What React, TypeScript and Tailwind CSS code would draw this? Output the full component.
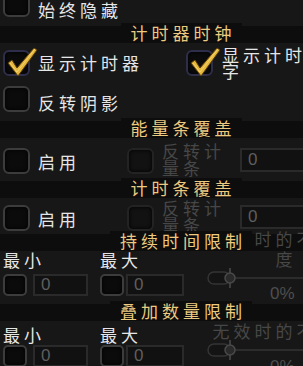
import type { ReactNode } from 'react';

function Check() {
  return (
    <svg className="pointer-events-none absolute -left-[2px] -top-[8px] h-[36px] w-[38px]" viewBox="0 0 38 36">
      <path d="M5 19 L9 16 L14 24 L31 4 L34 6 L15 32 Z" fill="#e4b63a" stroke="#5a3d0a" strokeWidth="1" strokeLinejoin="round" />
      <path d="M7 19 L14 28 L32 5" fill="none" stroke="#f8e08a" strokeWidth="1" opacity="0.7" />
    </svg>
  );
}

function Box({ on = false, dim = false, small = false }: { on?: boolean; dim?: boolean; small?: boolean }) {
  const size = small ? 'h-[22px] w-[24px] rounded-[5px]' : 'h-[26px] w-[27px] rounded-[6px]';
  const tone = dim
    ? 'border-[#232323] bg-[#121212]'
    : on
      ? 'border-[#2e2d4a] bg-[#0b0b0b]'
      : 'border-[#3c3c3c] bg-[#0b0b0b]';
  return (
    <div className={`relative shrink-0 border-2 shadow-[inset_0_0_4px_#000] ${size} ${tone}`}>
      {on && <Check />}
    </div>
  );
}

function Label({ children, className = '' }: { children: ReactNode; className?: string }) {
  return <span className={`text-[17px] leading-[20px] tracking-[4px] text-[#e6e6e6] ${className}`}>{children}</span>;
}

function Header({ children, className = '' }: { children: ReactNode; className?: string }) {
  return (
    <div className={`flex h-[17px] justify-center bg-[#0d0d0d] ${className}`}>
      <span className="relative z-20 -mt-[3px] h-[20px] bg-[#0d0d0d] px-[6px] pl-[10px] text-[17px] leading-[20px] tracking-[4px] text-[#ecca80]">
        {children}
      </span>
    </div>
  );
}

function Num({ className = '' }: { className?: string }) {
  return (
    <div
      className={`flex shrink-0 items-center border-2 border-[#2a2a2a] bg-[#111111] pl-[6px] font-['Liberation_Sans',sans-serif] text-[17px] text-[#5e5e5e] ${className}`}
    >
      0
    </div>
  );
}

function Slider() {
  return (
    <svg className="h-[20px] w-[100px]" viewBox="0 0 100 20">
      <line x1="24" y1="10" x2="100" y2="10" stroke="#2c2c2c" strokeWidth="2" />
      <rect x="3" y="4" width="22" height="12" rx="6" fill="#141414" stroke="#343434" strokeWidth="1.5" />
      <line x1="25" y1="0" x2="25" y2="20" stroke="#3e3e3e" strokeWidth="2" />
      <circle cx="25" cy="10" r="5" fill="#2a2a2a" stroke="#4a4a4a" strokeWidth="1.5" />
    </svg>
  );
}

function OverlayRow({ top }: { top: string }) {
  return (
    <div className={`flex h-[25px] items-start pl-[3px] ${top}`}>
      <div className="flex w-[124px] items-start">
        <Box />
        <Label className="ml-[8px] mt-[4px]">启用</Label>
      </div>
      <Box dim />
      <span className="-mt-[6px] ml-[8px] w-[66px] text-[17px] leading-[17px] tracking-[4px] text-[#474747]">反转计量条</span>
      <Num className="ml-[12px] h-[24px] w-[80px]" />
    </div>
  );
}

export default function App() {
  return (
    <div className="h-[366px] w-[303px] overflow-hidden bg-[#171717] font-['Noto_Sans_CJK_SC',sans-serif]">
      <div className="relative flex w-[362px] flex-col">
        <div className="-mt-[9px] flex h-[26px] items-start pl-[3px]">
          <Box />
          <Label className="ml-[8px] mt-[9px]">始终隐藏</Label>
        </div>

        <Header className="mt-[9px]">计时器时钟</Header>

        <div className="mt-[7px] flex h-[26px] items-start pl-[3px]">
          <div className="flex w-[183px] items-start">
            <Box on />
            <Label className="ml-[8px] mt-[3px]">显示计时器</Label>
          </div>
          <Box on />
          <span className="-mt-[3px] ml-[9px] w-[90px] text-[17px] leading-[16px] tracking-[4px] text-[#e6e6e6]">显示计时字</span>
        </div>

        <div className="mt-[10px] flex h-[25px] items-start pl-[3px]">
          <Box />
          <Label className="ml-[8px] mt-[7px]">反转阴影</Label>
        </div>

        <Header className="mt-[10px]">能量条覆盖</Header>
        <OverlayRow top="mt-[10px]" />

        <Header className="mt-[8px]">计时条覆盖</Header>
        <OverlayRow top="mt-[7px]" />

        <Header className="mt-[4px]">持续时间限制</Header>
        <div className="-mt-[1px] flex h-[20px] pl-[3px]">
          <Label className="w-[97px]">最小</Label>
          <Label>最大</Label>
        </div>
        <div className="mt-[4px] flex h-[22px] items-start pl-[3px]">
          <Box small />
          <Num className="ml-[6px] h-[22px] w-[55px]" />
          <div className="ml-[12px]">
            <Box small />
          </div>
          <Num className="ml-[2px] h-[22px] w-[58px]" />
        </div>

        <Header className="mt-[8px]">叠加数量限制</Header>
        <div className="mt-[4px] flex h-[20px] pl-[3px]">
          <Label className="w-[97px]">最小</Label>
          <Label>最大</Label>
        </div>
        <div className="flex h-[22px] items-start pl-[3px]">
          <Box small />
          <Num className="ml-[6px] h-[22px] w-[55px]" />
          <div className="ml-[12px]">
            <Box small />
          </div>
          <Num className="ml-[2px] h-[22px] w-[58px]" />
        </div>

        {/* slider column, drawn over the header bands */}
        <div className="absolute left-[208px] top-[229px] z-10 w-[156px] text-center text-[17px] leading-[20px] tracking-[4px] text-[#474747]">
          无效时的不透明度
        </div>
        <div className="absolute left-[205px] top-[268px]">
          <Slider />
        </div>
        <div className="absolute left-[270px] top-[284px] font-['Liberation_Sans',sans-serif] text-[17px] leading-[20px] text-[#4e4e4e]">
          0%
        </div>
        <div className="absolute left-[208px] top-[321px] z-10 h-[20px] w-[156px] overflow-hidden text-center text-[17px] leading-[20px] tracking-[4px] text-[#474747]">
          无效时的不透明度
        </div>
        <div className="absolute left-[205px] top-[340px]">
          <Slider />
        </div>
        <div className="absolute left-[270px] top-[357px] font-['Liberation_Sans',sans-serif] text-[17px] leading-[20px] text-[#4e4e4e]">
          0%
        </div>
      </div>
    </div>
  );
}
